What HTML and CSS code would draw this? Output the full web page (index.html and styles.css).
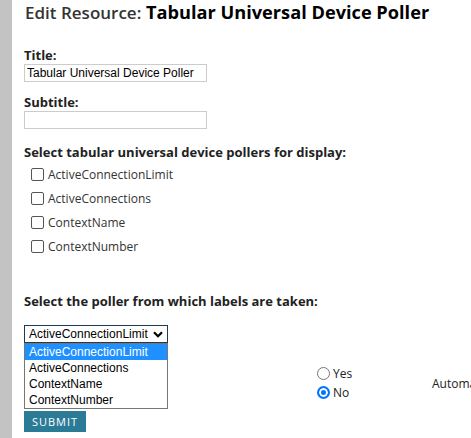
FILE: index.html
```html
<!DOCTYPE html>
<html>
<head>
<meta charset="utf-8">
<link rel="stylesheet" href="styles.css">
</head>
<body>
<div class="page">
  <div class="sidebar"></div>
  <div class="content">
    <h1 class="heading"><span class="heading-pre">Edit Resource:</span> Tabular Universal Device Poller</h1>

    <div class="field field-title">
      <label class="label">Title:</label>
      <input class="text-input" type="text" value="Tabular Universal Device Poller">
    </div>

    <div class="field field-subtitle">
      <label class="label">Subtitle:</label>
      <input class="text-input" type="text" value="">
    </div>

    <div class="field field-pollers">
      <div class="label">Select tabular universal device pollers for display:</div>
      <ul class="checks">
        <li class="check"><span class="box"></span>ActiveConnectionLimit</li>
        <li class="check"><span class="box"></span>ActiveConnections</li>
        <li class="check"><span class="box"></span>ContextName</li>
        <li class="check"><span class="box"></span>ContextNumber</li>
      </ul>
    </div>

    <div class="field labels-field">
      <div class="label">Select the poller from which labels are taken:</div>
      <div class="select-wrap">
        <div class="select">
          <span>ActiveConnectionLimit</span>
          <svg class="chev" width="10" height="7" viewBox="0 0 10 7"><path d="M1 1.2 L5 5.2 L9 1.2" fill="none" stroke="#000" stroke-width="2.2"/></svg>
        </div>
        <ul class="listbox">
          <li class="opt opt-active">ActiveConnectionLimit</li>
          <li class="opt">ActiveConnections</li>
          <li class="opt">ContextName</li>
          <li class="opt">ContextNumber</li>
        </ul>
      </div>
    </div>

    <div class="auto-row">
      <div class="radios">
        <div class="radio-line"><span class="radio"></span>Yes</div>
        <div class="radio-line"><span class="radio radio-on"></span>No</div>
      </div>
      <div class="auto-text">Automatic</div>
    </div>

    <button class="submit">SUBMIT</button>
  </div>
</div>
</body>
</html>
```

FILE: styles.css
```css
html, body {
  margin: 0;
  padding: 0;
  background: #fff;
  overflow: hidden;
}
.page {
  display: flex;
  width: 471px;
  height: 438px;
  overflow: hidden;
}
.sidebar {
  width: 12px;
  flex: none;
  background: #c3c3c3;
}
.content {
  flex: 1;
  padding-left: 12px;
  font-family: "Open Sans", sans-serif;
  color: #333;
  min-width: 0;
}
.heading {
  margin: 0;
  font-size: 18.2px;
  line-height: 24px;
  font-weight: 700;
  color: #000;
  white-space: nowrap;
  padding-left: 1px;
}
.heading-pre {
  color: #333;
  font-size: 17px;
  font-weight: 600;
}
.field-title {
  margin-top: 22px;
}
.field-subtitle {
  margin-top: 12px;
}
.field-pollers {
  margin-top: 15px;
}
.label {
  display: block;
  font-size: 13px;
  font-weight: 700;
  line-height: 16px;
  color: #222;
  white-space: nowrap;
}
.text-input {
  display: block;
  box-sizing: border-box;
  width: 183px;
  height: 18px;
  margin: 1px 0 0 0;
  padding: 0 2px;
  border: 1px solid #ccc;
  font-family: "Liberation Sans", Arial, sans-serif;
  font-size: 12px;
  color: #000;
  outline: none;
}
.checks {
  list-style: none;
  margin: 2px 0 0 0;
  padding: 0 0 0 7px;
}
.check {
  display: flex;
  align-items: center;
  height: 24px;
  font-size: 12px;
  color: #333;
}
.box {
  box-sizing: border-box;
  width: 13px;
  height: 13px;
  border: 1px solid #555;
  border-radius: 2px;
  margin-right: 4px;
}
.labels-field {
  margin-top: 35px;
}
.select-wrap {
  position: relative;
  margin-top: 16px;
  width: 144px;
}
.select {
  box-sizing: border-box;
  height: 18px;
  width: 144px;
  border: 1px solid #1c3b57;
  display: flex;
  align-items: center;
  justify-content: space-between;
  padding: 0 4px 0 4px;
  font-family: "Liberation Sans", Arial, sans-serif;
  font-size: 12px;
  color: #000;
}
.chev {
  flex: none;
}
.listbox {
  position: absolute;
  left: 0;
  top: 18px;
  box-sizing: border-box;
  width: 144px;
  margin: 0;
  padding: 0;
  list-style: none;
  border: 1px solid #767676;
  background: #fff;
  z-index: 2;
}
.opt {
  height: 16px;
  line-height: 16px;
  padding-left: 4px;
  font-family: "Liberation Sans", Arial, sans-serif;
  font-size: 12px;
  color: #000;
}
.opt-active {
  background: #1e90ff;
  color: #fff;
}
.auto-row {
  display: flex;
  align-items: center;
  margin-top: 21px;
  padding-left: 293px;
  white-space: nowrap;
}
.radios {
  width: 115px;
  flex: none;
}
.radio-line {
  display: flex;
  align-items: center;
  height: 19px;
  font-size: 12px;
  color: #222;
}
.radio {
  box-sizing: border-box;
  width: 13px;
  height: 13px;
  border: 1px solid #777;
  border-radius: 50%;
  margin-right: 3px;
}
.radio-on {
  border: 2px solid #0075ff;
  background: #0075ff;
  box-shadow: inset 0 0 0 2px #fff;
}
.auto-text {
  font-size: 12px;
  color: #222;
}
.submit {
  display: block;
  margin-top: 9px;
  width: 62px;
  height: 21px;
  border: 0;
  padding: 0;
  background: #2b7b96;
  color: #fff;
  font-family: "Open Sans", sans-serif;
  font-size: 11px;
  letter-spacing: 1px;
}
```
